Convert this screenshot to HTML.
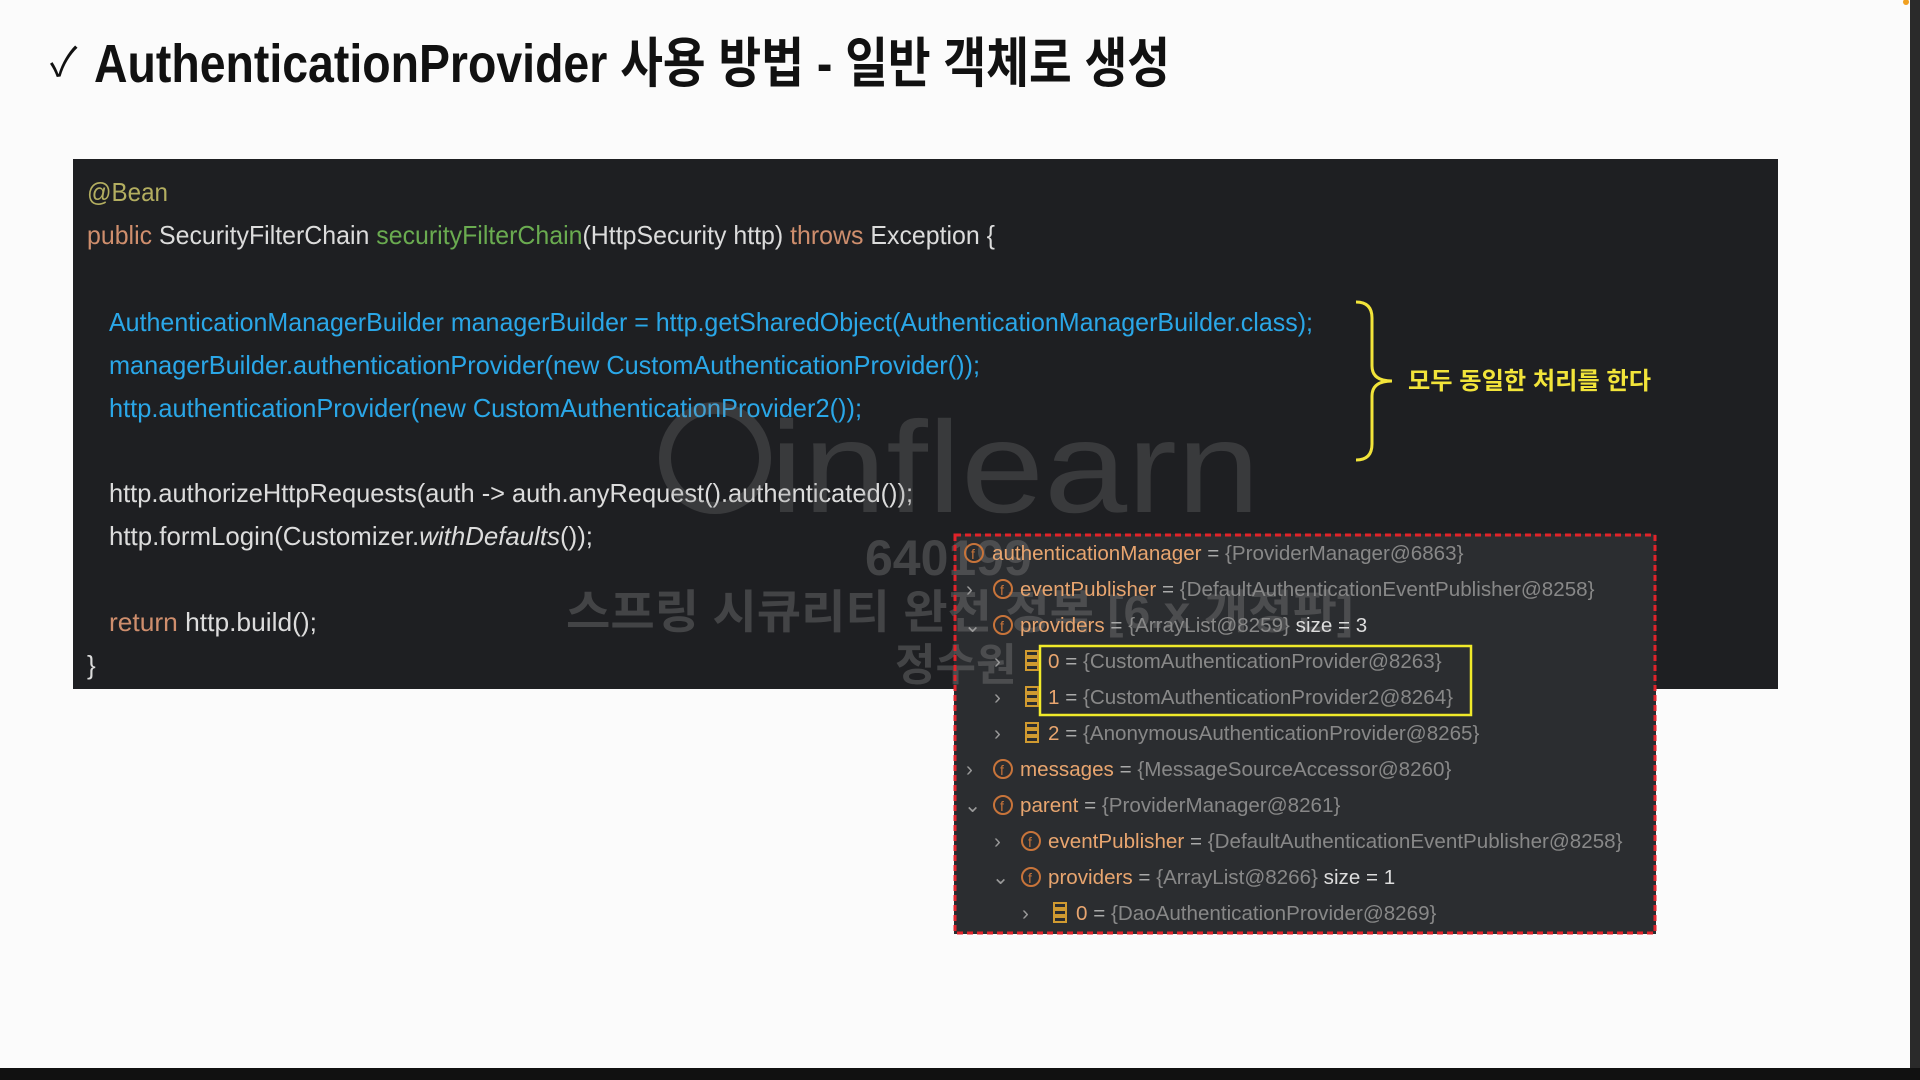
<!DOCTYPE html>
<html><head><meta charset="utf-8"><style>
html,body{margin:0;padding:0;width:1920px;height:1080px;overflow:hidden;background:#fbfbfb}
svg{display:block}
</style></head><body>
<svg width="1920" height="1080" viewBox="0 0 1920 1080" xmlns="http://www.w3.org/2000/svg" font-family="Liberation Sans, Noto Sans CJK KR, sans-serif">
<rect width="1920" height="1080" fill="#fbfbfb"/>
<rect x="1910" y="0" width="10" height="1080" fill="#2a2a2a"/>
<rect x="0" y="1068" width="1920" height="12" fill="#111"/>
<circle cx="1906" cy="2" r="3" fill="#f0a020"/>
<!-- title -->
<text x="50" y="76" font-size="40" fill="#111">✓</text>
<text x="94" y="82" font-size="54" font-weight="bold" fill="#111" textLength="1076" lengthAdjust="spacingAndGlyphs">AuthenticationProvider 사용 방법 - 일반 객체로 생성</text>
<!-- code panel -->
<rect x="73" y="159" width="1705" height="530" fill="#1e1f22"/>
<g font-size="26">
<text x="87" y="201" fill="#b3ae60" textLength="81" lengthAdjust="spacingAndGlyphs">@Bean</text>
<text x="87" y="244" fill="#dcdcdc" textLength="908" lengthAdjust="spacingAndGlyphs"><tspan fill="#cf8e6d">public</tspan> SecurityFilterChain <tspan fill="#6aab50">securityFilterChain</tspan>(HttpSecurity http) <tspan fill="#cf8e6d">throws</tspan> Exception {</text>
<text x="109" y="331" fill="#2aa7e8" textLength="1204" lengthAdjust="spacingAndGlyphs">AuthenticationManagerBuilder managerBuilder = http.getSharedObject(AuthenticationManagerBuilder.class);</text>
<text x="109" y="374" fill="#2aa7e8" textLength="871" lengthAdjust="spacingAndGlyphs">managerBuilder.authenticationProvider(new CustomAuthenticationProvider());</text>
<text x="109" y="417" fill="#2aa7e8" textLength="753" lengthAdjust="spacingAndGlyphs">http.authenticationProvider(new CustomAuthenticationProvider2());</text>
<text x="109" y="502" fill="#dcdcdc" textLength="804" lengthAdjust="spacingAndGlyphs">http.authorizeHttpRequests(auth -&gt; auth.anyRequest().authenticated());</text>
<text x="109" y="545" fill="#dcdcdc" textLength="484" lengthAdjust="spacingAndGlyphs">http.formLogin(Customizer.<tspan font-style="italic">withDefaults</tspan>());</text>
<text x="109" y="631" fill="#dcdcdc" textLength="208" lengthAdjust="spacingAndGlyphs"><tspan fill="#cf8e6d">return</tspan> http.build();</text>
<text x="87" y="674" fill="#dcdcdc">}</text>
</g>
<!-- brace -->
<path d="M1356,302 Q1372,302 1372,318 L1372,366 Q1372,381 1392,381 Q1372,381 1372,396 L1372,444 Q1372,460 1356,460" fill="none" stroke="#f2e43a" stroke-width="3"/>
<text x="1408" y="389" font-size="24" font-weight="bold" fill="#f2e43a" textLength="243" lengthAdjust="spacingAndGlyphs">모두 동일한 처리를 한다</text>
<!-- watermark -->
<g fill="#8a8a8a" opacity="0.25">
<circle cx="715" cy="458" r="50" fill="none" stroke="#8a8a8a" stroke-width="12"/>
<text x="770" y="512" font-size="130" textLength="490" lengthAdjust="spacingAndGlyphs">inflearn</text>
</g>
<!-- debug panel -->
<rect x="954" y="534" width="702" height="400" fill="#2b2d30"/>
<g fill="#8a8a8a" opacity="0.35" font-weight="bold">
<text x="865" y="575" font-size="50">640199</text>
<text x="566" y="628" font-size="46" textLength="787" lengthAdjust="spacingAndGlyphs">스프링 시큐리티 완전 정복 [6.x 개정판]</text>
<text x="895" y="680" font-size="44">정수원</text>
</g>
<rect x="955" y="535" width="700" height="398" fill="none" stroke="#e0232a" stroke-width="3" stroke-dasharray="6,4"/>
<rect x="1040" y="646" width="431" height="69" fill="none" stroke="#f0ea2a" stroke-width="2.5"/>
<defs>
<g id="fi"><circle r="9" fill="none" stroke="#c8743a" stroke-width="2"/><text x="-3" y="6" font-size="14" fill="#c8743a">f</text></g>
<g id="ar"><rect x="-6" y="-10" width="12" height="5" fill="none" stroke="#d09a30" stroke-width="2"/><rect x="-6" y="-3" width="12" height="5" fill="none" stroke="#d09a30" stroke-width="2"/><rect x="-6" y="4" width="12" height="5" fill="none" stroke="#d09a30" stroke-width="2"/></g>
</defs>
<g font-size="20.6">
<use href="#fi" x="974" y="553"/>
<text x="992" y="560" fill="#e8a56f">authenticationManager <tspan fill="#aaa">=</tspan> <tspan fill="#888">{ProviderManager@6863}</tspan></text>

<text x="966" y="596" fill="#999">›</text><use href="#fi" x="1003" y="589"/>
<text x="1020" y="596" fill="#e8a56f">eventPublisher <tspan fill="#aaa">=</tspan> <tspan fill="#888">{DefaultAuthenticationEventPublisher@8258}</tspan></text>

<text x="964" y="632" fill="#999">⌄</text><use href="#fi" x="1003" y="625"/>
<text x="1020" y="632" fill="#e8a56f">providers <tspan fill="#aaa">=</tspan> <tspan fill="#888">{ArrayList@8259}</tspan> <tspan fill="#ddd"> size = 3</tspan></text>

<text x="994" y="668" fill="#999">›</text><use href="#ar" x="1032" y="661"/>
<text x="1048" y="668" fill="#e8a56f">0 <tspan fill="#aaa">=</tspan> <tspan fill="#888">{CustomAuthenticationProvider@8263}</tspan></text>

<text x="994" y="704" fill="#999">›</text><use href="#ar" x="1032" y="697"/>
<text x="1048" y="704" fill="#e8a56f">1 <tspan fill="#aaa">=</tspan> <tspan fill="#888">{CustomAuthenticationProvider2@8264}</tspan></text>

<text x="994" y="740" fill="#999">›</text><use href="#ar" x="1032" y="733"/>
<text x="1048" y="740" fill="#e8a56f">2 <tspan fill="#aaa">=</tspan> <tspan fill="#888">{AnonymousAuthenticationProvider@8265}</tspan></text>

<text x="966" y="776" fill="#999">›</text><use href="#fi" x="1003" y="769"/>
<text x="1020" y="776" fill="#e8a56f">messages <tspan fill="#aaa">=</tspan> <tspan fill="#888">{MessageSourceAccessor@8260}</tspan></text>

<text x="964" y="812" fill="#999">⌄</text><use href="#fi" x="1003" y="805"/>
<text x="1020" y="812" fill="#e8a56f">parent <tspan fill="#aaa">=</tspan> <tspan fill="#888">{ProviderManager@8261}</tspan></text>

<text x="994" y="848" fill="#999">›</text><use href="#fi" x="1031" y="841"/>
<text x="1048" y="848" fill="#e8a56f">eventPublisher <tspan fill="#aaa">=</tspan> <tspan fill="#888">{DefaultAuthenticationEventPublisher@8258}</tspan></text>

<text x="992" y="884" fill="#999">⌄</text><use href="#fi" x="1031" y="877"/>
<text x="1048" y="884" fill="#e8a56f">providers <tspan fill="#aaa">=</tspan> <tspan fill="#888">{ArrayList@8266}</tspan> <tspan fill="#ddd"> size = 1</tspan></text>

<text x="1022" y="920" fill="#999">›</text><use href="#ar" x="1060" y="913"/>
<text x="1076" y="920" fill="#e8a56f">0 <tspan fill="#aaa">=</tspan> <tspan fill="#888">{DaoAuthenticationProvider@8269}</tspan></text>
</g>
</svg>
</body></html>
